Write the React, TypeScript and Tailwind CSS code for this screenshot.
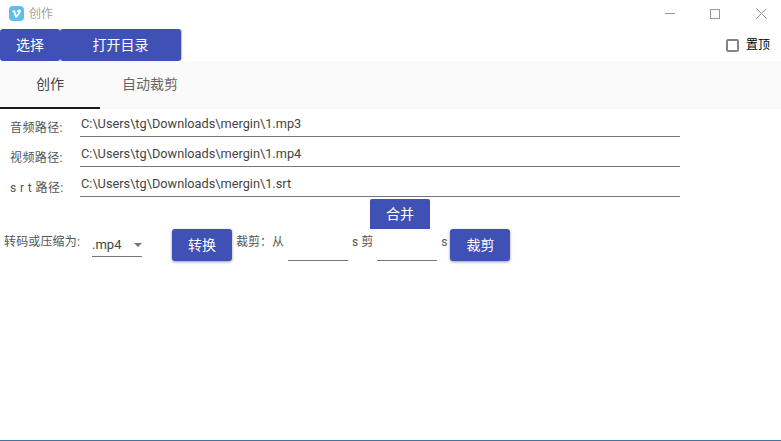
import React from 'react';

const font = "font-['Roboto','Noto_Sans_CJK_SC',sans-serif]";

const paths = [
    { label: '音频路径:', value: 'C:\\Users\\tg\\Downloads\\mergin\\1.mp3' },
    { label: '视频路径:', value: 'C:\\Users\\tg\\Downloads\\mergin\\1.mp4' },
    { label: 's r t 路径:', value: 'C:\\Users\\tg\\Downloads\\mergin\\1.srt' },
];

function VimeoLogo() {
    return (
        <svg width="15" height="15" viewBox="0 0 15 15">
            <rect width="15" height="15" rx="4" fill="#5cc0ea" />
            <path d="M3 5.6 L4.4 4.4 Q5.8 3.4 6.2 5 L6.9 8 Q7.3 9.4 7.9 8.6 Q9.2 6.9 9 6.2 Q8.7 5.4 7.8 5.8 Q8.6 3.2 10.6 3.4 Q12.3 3.6 11.9 5.6 Q11.2 8 8.6 10.8 Q6.6 12.6 5.8 10.6 L4.7 6.6 Q4.4 5.4 3.6 6.2 Z" fill="#fff" />
        </svg>
    );
}

function RaisedButton({ children }: { children: React.ReactNode }) {
    return (
        <button className="h-8 w-[60px] shrink-0 rounded-[3px] bg-[#3f51b5] text-[14px] text-white shadow-[0_1px_3px_rgba(0,0,0,0.4)]">
            {children}
        </button>
    );
}

export default function App() {
    return (
        <div className={`${font} flex h-[441px] w-[781px] flex-col overflow-hidden bg-white text-[#333]`}>
            {/* 标题栏 */}
            <div className="flex h-[29px] items-center justify-between pb-[2px]">
                <div className="flex items-center gap-[5px] pl-[9px]">
                    <VimeoLogo />
                    <span className="text-[12px] text-[#a0a0a0]">创作</span>
                </div>
                <div className="flex items-center gap-[35px] pr-[14px]">
                    <div className="h-px w-[10px] bg-[#999]" />
                    <div className="mr-px h-[10px] w-[10px] border border-[#999]" />
                    <svg width="11" height="11" viewBox="0 0 11 11"><path d="M0.5 0.5 L10.5 10.5 M10.5 0.5 L0.5 10.5" stroke="#999" strokeWidth="1" /></svg>
                </div>
            </div>

            {/* 工具栏 */}
            <div className="flex h-[32px] items-center justify-between">
                <div className="flex h-full">
                    <button className="h-full w-[60px] rounded-[3px] bg-[#3f51b5] text-[14px] text-white shadow-[1px_0_1px_rgba(0,0,0,0.25)]">选择</button>
                    <button className="h-full w-[121px] rounded-[3px] bg-[#3f51b5] text-[14px] text-white shadow-[1px_0_1px_rgba(0,0,0,0.25)]">打开目录</button>
                </div>
                <label className="flex items-center gap-[7px] pr-[11px] text-[12px] text-black">
                    <span className="h-[13px] w-[13px] rounded-[2px] border-2 border-[#858585]" />
                    置顶
                </label>
            </div>

            {/* 标签页 */}
            <div className="flex h-[48px] bg-[#fafafa] text-[14px]">
                <div className="flex w-[100px] items-center justify-center border-b-2 border-[#1a1a1a] text-[#444]">创作</div>
                <div className="flex w-[100px] items-center justify-center pb-[2px] text-[#666]">自动裁剪</div>
            </div>

            {/* 路径 */}
            <div className="flex flex-col gap-[2px]">
                {paths.map((p) => (
                    <div key={p.label} className="flex h-[28px] items-start">
                        <span className="w-[80px] whitespace-pre pt-[8px] pl-[10px] text-[12px] leading-[22px] tracking-[0.4px] text-[#555]">{p.label}</span>
                        <div className="h-[28px] w-[600px] border-b border-[#767676] pt-[2px] pl-[1px] text-[12.75px] leading-[25px] text-[#444]">{p.value}</div>
                    </div>
                ))}
            </div>

            <div className="flex justify-center pt-[2px] pl-[19px]">
                <button className="h-[30px] w-[60px] rounded-t-[2px] bg-[#3f51b5] text-[14px] text-white">合并</button>
            </div>

            {/* 转码 裁剪 */}
            <div className="flex h-[32px] items-center text-[12px] text-[#555]">
                <span className="w-[92px] pb-[6px] pl-[4px] tracking-[0.15px]">转码或压缩为:</span>
                <div className="flex h-[28px] w-[50px] items-center justify-between self-start border-b border-[#767676] pt-[5px] text-[13px] text-[#444]">
                    <span>.mp4</span>
                    <span className="h-0 w-0 border-x-[4px] border-t-[4px] border-x-transparent border-t-[#757575]" />
                </div>
                <div className="ml-[30px]"><RaisedButton>转换</RaisedButton></div>
                <span className="ml-[4px] pb-[6px]">裁剪：从</span>
                <div className="ml-[4px] h-full w-[60px] border-b border-[#767676]" />
                <span className="ml-[4px] pb-[6px]">s 剪</span>
                <div className="ml-[4px] h-full w-[60px] border-b border-[#767676]" />
                <span className="ml-[4px] pb-[6px]">s</span>
                <div className="ml-[3px]"><RaisedButton>裁剪</RaisedButton></div>
            </div>

            <div className="flex-1" />
            <div className="h-px bg-[#3a76a8]" />
        </div>
    );
}
